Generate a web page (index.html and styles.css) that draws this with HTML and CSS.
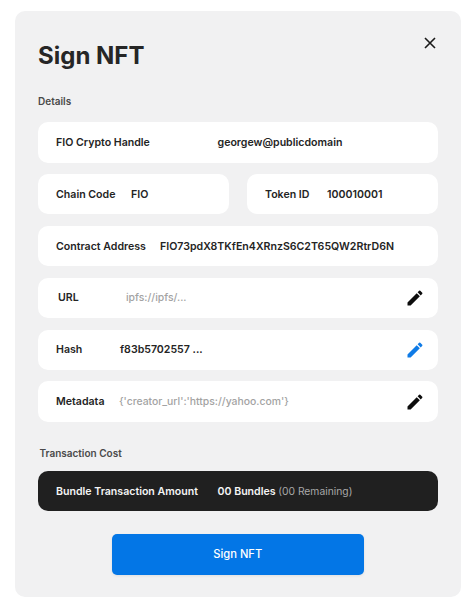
FILE: index.html
```html
<!DOCTYPE html>
<html lang="en">
<head>
<meta charset="utf-8">
<title>Sign NFT</title>
<link rel="stylesheet" href="styles.css">
</head>
<body>
<main class="panel">
  <header class="head">
    <h1 class="title">Sign NFT</h1>
    <button class="close" aria-label="Close">
      <svg viewBox="0 0 12 12" width="12" height="12"><path d="M1 1l10 10M11 1L1 11" fill="none" stroke="#1a1a1a" stroke-width="1.6"/></svg>
    </button>
  </header>
  <h2 class="section">Details</h2>
  <div class="rows">
    <div class="row"><span class="label w-handle">FIO Crypto Handle</span><span class="value">georgew@publicdomain</span></div>
    <div class="pair">
      <div class="row"><span class="label w-chain">Chain Code</span><span class="value">FIO</span></div>
      <div class="row row-token"><span class="label w-token">Token ID</span><span class="value">100010001</span></div>
    </div>
    <div class="row"><span class="label w-contract">Contract Address</span><span class="value">FIO73pdX8TKfEn4XRnzS6C2T65QW2RtrD6N</span></div>
    <div class="row row-url"><span class="label w-url">URL</span><span class="value muted">ipfs://ipfs/...</span>
      <svg class="pen" viewBox="0 0 24 24"><path d="M3 17.25V21h3.75L17.81 9.94l-3.75-3.75L3 17.25zM20.71 7.04c.39-.39.39-1.02 0-1.41l-2.34-2.34a.996.996 0 0 0-1.41 0l-1.83 1.83 3.75 3.75 1.83-1.83z"/></svg>
    </div>
    <div class="row"><span class="label w-hash">Hash</span><span class="value">f83b5702557 ...</span>
      <svg class="pen pen-blue" viewBox="0 0 24 24"><path d="M3 17.25V21h3.75L17.81 9.94l-3.75-3.75L3 17.25zM20.71 7.04c.39-.39.39-1.02 0-1.41l-2.34-2.34a.996.996 0 0 0-1.41 0l-1.83 1.83 3.75 3.75 1.83-1.83z"/></svg>
    </div>
    <div class="row"><span class="label w-meta">Metadata</span><span class="value muted">{'creator_url':'https://yahoo.com'}</span>
      <svg class="pen" viewBox="0 0 24 24"><path d="M3 17.25V21h3.75L17.81 9.94l-3.75-3.75L3 17.25zM20.71 7.04c.39-.39.39-1.02 0-1.41l-2.34-2.34a.996.996 0 0 0-1.41 0l-1.83 1.83 3.75 3.75 1.83-1.83z"/></svg>
    </div>
  </div>
  <h2 class="section section-cost">Transaction Cost</h2>
  <div class="row row-dark"><span class="label w-handle">Bundle Transaction Amount</span><span class="value">00 Bundles <span class="remaining">(00 Remaining)</span></span></div>
  <button class="submit">Sign NFT</button>
</main>
</body>
</html>
```
FILE: styles.css
```css
* { box-sizing: border-box; }
html, body { margin: 0; background: #fff; }
body { font-family: Inter, "Liberation Sans", sans-serif; color: #202020; padding: 11px 12px 19px 15px; }
.panel {
  width: 446px; height: 586px; background: #f1f1f2; border-radius: 10px;
  padding: 0 23px 0 22.5px; display: flex; flex-direction: column;
}
.head { display: flex; justify-content: space-between; align-items: flex-start; height: 60px; }
.title { margin: 30px 0 0 0.5px; font-size: 24px; line-height: 30px; font-weight: 700; color: #262626; }
.close { margin: 26px 2.5px 0 0; padding: 0; border: 0; background: none; width: 12px; height: 12px; display: flex; }
.section { margin: 23px 0 0 0.5px; font-size: 10px; line-height: 14px; font-weight: 600; color: #4a4a4a; }
.section-cost { margin: 24px 0 0 2px; }
.rows { margin-top: 14px; display: flex; flex-direction: column; gap: 11.4px; }
.pair { display: grid; grid-template-columns: 191px 191.5px; gap: 18px; }
.row {
  height: 40.5px; background: #fff; border-radius: 10px; padding: 0 13.5px 0 18.5px;
  display: flex; align-items: center; font-size: 10.6px; font-weight: 600; color: #242424;
}
.row-url .label { padding-left: 2px; }
.label { flex: none; }
.value { flex: none; }
.w-handle { width: 161.5px; }
.w-chain { width: 75px; }
.w-token { width: 62px; }
.w-contract { width: 104px; }
.w-url { width: 70px; }
.w-hash { width: 64px; }
.w-meta { width: 63px; }
.muted { color: #a3a3a3; font-weight: 500; font-size: 10.4px; }
.pen { width: 20px; height: 20px; margin-left: auto; fill: #0d0d0d; }
.pen-blue { fill: #0f7be6; }
.row-dark { margin-top: 11px; background: #202020; color: #f4f4f4; }
.remaining { color: #a8a8a8; font-weight: 400; font-size: 10.3px; }
.submit {
  align-self: center; margin-top: 22.5px; width: 251.5px; height: 41px; border: 0; border-radius: 5px;
  background: #0376e6; color: #fff; font: 500 11.2px Inter, "Liberation Sans", sans-serif;
  box-shadow: 0 1px 3px rgba(0,0,0,.08);
}
```
